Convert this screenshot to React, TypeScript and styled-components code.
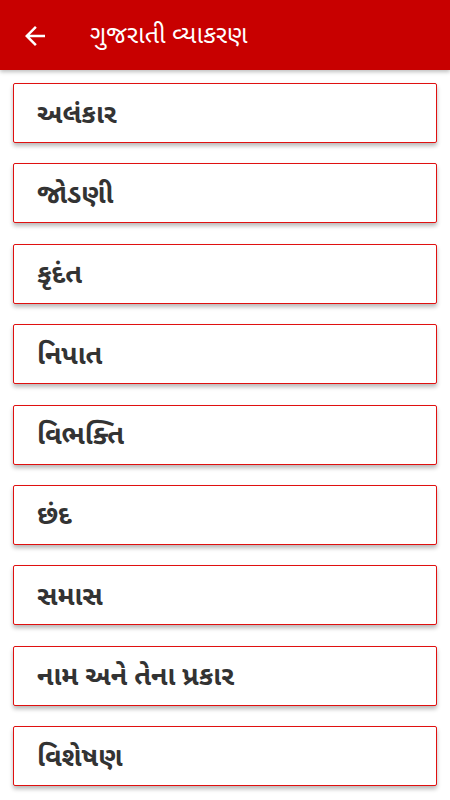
import React from "react";
import styled, { createGlobalStyle } from "styled-components";

const topics = [
  "અલંકાર",
  "જોડણી",
  "કૃદંત",
  "નિપાત",
  "વિભક્તિ",
  "છંદ",
  "સમાસ",
  "નામ અને તેના પ્રકાર",
  "વિશેષણ",
];

const GlobalStyle = createGlobalStyle`
  html, body {
    margin: 0;
    padding: 0;
    background: #fff;
    font-family: "Noto Sans Gujarati", "Noto Sans", Roboto, sans-serif;
  }
`;

const App = () => {
  return (
    <>
      <GlobalStyle />
      <Page>
        <Toolbar>
          <BackBtn aria-label="back">
            <svg width="30" height="30" viewBox="0 0 24 24" fill="#fff">
              <path d="M20 11H7.83l5.59-5.59L12 4l-8 8 8 8 1.41-1.41L7.83 13H20v-2z" />
            </svg>
          </BackBtn>
          <Title>ગુજરાતી વ્યાકરણ</Title>
        </Toolbar>
        <List>
          {topics.map((t) => (
            <Card key={t}>{t}</Card>
          ))}
        </List>
      </Page>
    </>
  );
};

export default App;

const Page = styled.div`
  width: 450px;
  height: 800px;
  overflow: hidden;
`;

const Toolbar = styled.div`
  height: 70px;
  background: #c80000;
  display: flex;
  align-items: center;
  box-shadow: 0 2px 4px rgba(0, 0, 0, 0.25);
  position: relative;
  z-index: 1;
`;

const BackBtn = styled.button`
  width: 30px;
  height: 30px;
  margin: 2px 0 0 20px;
  padding: 0;
  border: none;
  background: none;
  display: flex;
  align-items: center;
  justify-content: center;
`;

const Title = styled.h1`
  margin: 4px 0 0 40px;
  color: #fff;
  font-size: 25px;
  font-weight: 400;
`;

const List = styled.div`
  display: flex;
  flex-direction: column;
  gap: 20.375px;
  padding: 13px 13px 0;
`;

const Card = styled.div`
  height: 60px;
  box-sizing: border-box;
  border: 1px solid #e01010;
  border-radius: 2px;
  background: #fff;
  box-shadow: 0 3px 4px rgba(0, 0, 0, 0.28);
  display: flex;
  align-items: center;
  padding: 6px 0 0 23px;
  color: #333;
  font-size: 27px;
  font-weight: 700;
`;
